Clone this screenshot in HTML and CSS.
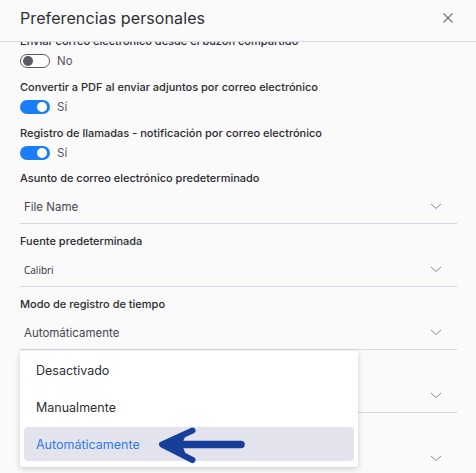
FILE: index.html
```html
<!DOCTYPE html>
<html lang="es">
<head>
<meta charset="utf-8">
<title>Preferencias personales</title>
<link rel="stylesheet" href="styles.css">
</head>
<body>
<div class="dialog">
  <header class="header">
    <h1 class="title">Preferencias personales</h1>
    <button class="close" aria-label="Cerrar">
      <svg width="10" height="10" viewBox="0 0 10 10"><path d="M0.5 0.5 L9.5 9.5 M9.5 0.5 L0.5 9.5" stroke="#6f6f78" stroke-width="1.1" fill="none"/></svg>
    </button>
  </header>
  <div class="body">
    <div class="scroll">
      <div class="field toggle-field">
        <div class="label">Enviar correo electrónico desde el buzón compartido</div>
        <div class="toggle-row"><span class="switch off"><span class="knob"></span></span><span class="toggle-text">No</span></div>
      </div>
      <div class="field toggle-field">
        <div class="label">Convertir a PDF al enviar adjuntos por correo electrónico</div>
        <div class="toggle-row"><span class="switch on"><span class="knob"></span></span><span class="toggle-text">Sí</span></div>
      </div>
      <div class="field toggle-field last-toggle">
        <div class="label">Registro de llamadas - notificación por correo electrónico</div>
        <div class="toggle-row"><span class="switch on"><span class="knob"></span></span><span class="toggle-text">Sí</span></div>
      </div>
      <div class="field select-field">
        <div class="label">Asunto de correo electrónico predeterminado</div>
        <div class="select"><span class="value">File Name</span><svg class="chev" width="12" height="7" viewBox="0 0 12 7"><path d="M1 1 L6 5.5 L11 1" stroke="#8a8a92" stroke-width="1" fill="none"/></svg></div>
      </div>
      <div class="field select-field">
        <div class="label">Fuente predeterminada</div>
        <div class="select"><span class="value calibri">Calibri</span><svg class="chev" width="12" height="7" viewBox="0 0 12 7"><path d="M1 1 L6 5.5 L11 1" stroke="#8a8a92" stroke-width="1" fill="none"/></svg></div>
      </div>
      <div class="field select-field">
        <div class="label">Modo de registro de tiempo</div>
        <div class="select"><span class="value">Automáticamente</span><svg class="chev" width="12" height="7" viewBox="0 0 12 7"><path d="M1 1 L6 5.5 L11 1" stroke="#8a8a92" stroke-width="1" fill="none"/></svg></div>
      </div>
      <div class="field select-field">
        <div class="label">Zona horaria</div>
        <div class="select"><span class="value">UTC</span><svg class="chev" width="12" height="7" viewBox="0 0 12 7"><path d="M1 1 L6 5.5 L11 1" stroke="#8a8a92" stroke-width="1" fill="none"/></svg></div>
      </div>
      <div class="field select-field">
        <div class="label">Idioma</div>
        <div class="select"><span class="value">Español</span><svg class="chev" width="12" height="7" viewBox="0 0 12 7"><path d="M1 1 L6 5.5 L11 1" stroke="#8a8a92" stroke-width="1" fill="none"/></svg></div>
      </div>
    </div>
  </div>

  <ul class="menu">
    <li class="item">Desactivado</li>
    <li class="item">Manualmente</li>
    <li class="item selected">Automáticamente</li>
  </ul>

  <svg class="arrow" width="476" height="473" viewBox="0 0 476 473">
    <path d="M168 444.5 L241 444.5" stroke="#173f99" stroke-width="7.5" stroke-linecap="round" fill="none"/>
    <path d="M192.5 430.5 L162 444.5 L192.5 460" stroke="#173f99" stroke-width="6" stroke-linecap="round" stroke-linejoin="round" fill="none"/>
    <path d="M162 444.5 L186 434 L182 444.5 L186 455 Z" fill="#173f99"/>
  </svg>
</div>
</body>
</html>
```

FILE: styles.css
```css
* { box-sizing: border-box; }

html, body {
  margin: 0;
  padding: 0;
  background: #fafafa;
}

body {
  font-family: Inter, "Noto Sans", "DejaVu Sans", sans-serif;
  color: #2e2e33;
}

.dialog {
  position: relative;
  width: 476px;
  height: 473px;
  overflow: hidden;
  background: #fafafa;
}

.header {
  height: 42px;
  display: flex;
  align-items: center;
  justify-content: space-between;
  padding: 0 23px 0 20px;
  border-bottom: 1px solid #d9d8e4;
  background: #fafafa;
}

.title {
  margin: 0;
  font-size: 16px;
  font-weight: 400;
  color: #2f2f35;
  line-height: 20px;
  padding-bottom: 5px;
  letter-spacing: 0.1px;
}

.close {
  border: 0;
  background: none;
  padding: 0;
  width: 10px;
  height: 10px;
  display: flex;
  margin-bottom: 6px;
}

.body {
  height: 431px;
  overflow: hidden;
}

.scroll {
  margin-top: -9px;
  padding: 0 19px 0 20px;
}

.label {
  font-size: 11px;
  font-weight: 500;
  line-height: 16px;
  color: #2a2a30;
  white-space: nowrap;
}

.toggle-field {
  margin-bottom: 11px;
}

.last-toggle {
  margin-bottom: 10px;
}

.toggle-row {
  margin-top: 5px;
  display: flex;
  align-items: center;
  height: 14px;
}

.switch {
  position: relative;
  width: 30px;
  height: 14px;
  border-radius: 7px;
  display: inline-block;
}

.switch.on {
  background: #1a7ff6;
}

.switch.off {
  background: #ffffff;
  border: 1.3px solid #5a5a60;
}

.knob {
  position: absolute;
  top: 2px;
  width: 10px;
  height: 10px;
  border-radius: 50%;
}

.switch.on .knob {
  right: 3px;
  background: #ffffff;
}

.switch.off .knob {
  left: 2px;
  top: 1px;
  background: #5a5a60;
}

.toggle-text {
  margin-left: 7px;
  font-size: 11.5px;
  color: #55555c;
}

.select-field {
  margin-bottom: 9px;
}

.select {
  margin-top: 4px;
  height: 34px;
  display: flex;
  align-items: center;
  justify-content: space-between;
  padding: 0 15px 0 4px;
  border-bottom: 1px solid #d7d5e4;
}

.value {
  font-size: 11.5px;
  color: #46464c;
}

.value.calibri {
  font-family: "Open Sans", "Liberation Sans", sans-serif;
  font-size: 10px;
  color: #2c2c30;
}

.chev {
  display: block;
}

.menu {
  position: absolute;
  left: 20px;
  top: 351px;
  width: 338px;
  height: 116px;
  margin: 0;
  padding: 2px 4px 6px;
  list-style: none;
  background: #ffffff;
  border-radius: 2px;
  box-shadow: 0 2px 6px rgba(0, 0, 0, 0.16), 0 0 1px rgba(0, 0, 0, 0.12);
}

.item {
  height: 34px;
  display: flex;
  align-items: center;
  padding-left: 12px;
  font-size: 12.5px;
  color: #2f2f35;
  border-radius: 4px;
}

.item + .item {
  margin-top: 3px;
}

.item.selected {
  background: #e3e3ed;
  color: #2f7be6;
}

.arrow {
  position: absolute;
  left: 0;
  top: 0;
  pointer-events: none;
}
```
